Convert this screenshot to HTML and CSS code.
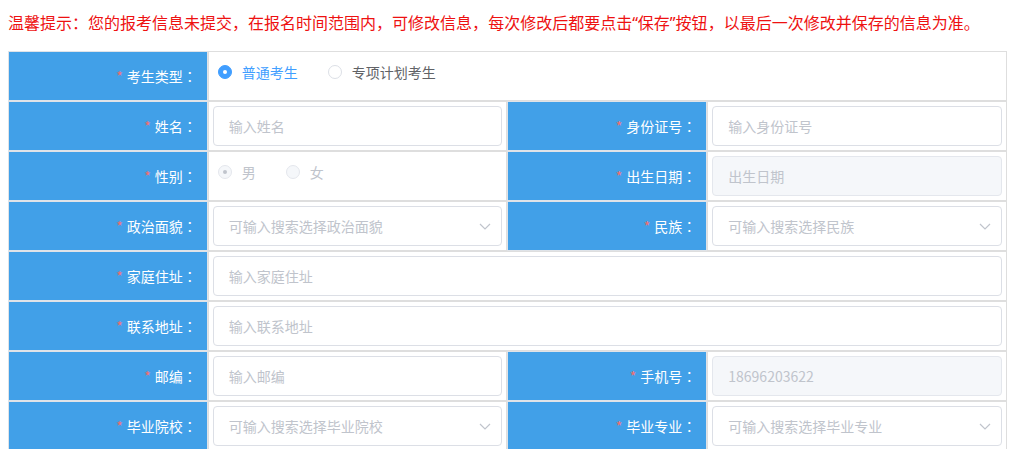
FILE: index.html
```html
<!DOCTYPE html>
<html lang="zh-CN">
<head>
<meta charset="utf-8">
<title>报考信息</title>
<link rel="stylesheet" href="styles.css">
</head>
<body>
<p class="notice">温馨提示<span class="cp">：</span>您的报考信息未提交<span class="cp">，</span>在报名时间范围内<span class="cp">，</span>可修改信息<span class="cp">，</span>每次修改后都要点击“保存”按钮<span class="cp">，</span>以最后一次修改并保存的信息为准。</p>
<div class="form-grid">
  <div class="cell label"><span class="req">*</span>考生类型<span class="colon">：</span></div>
  <div class="cell value span3 radios">
    <label class="radio checked"><span class="dot"></span><span class="rtext">普通考生</span></label>
    <label class="radio"><span class="dot"></span><span class="rtext">专项计划考生</span></label>
  </div>

  <div class="cell label"><span class="req">*</span>姓名<span class="colon">：</span></div>
  <div class="cell value"><div class="input">输入姓名</div></div>
  <div class="cell label"><span class="req">*</span>身份证号<span class="colon">：</span></div>
  <div class="cell value"><div class="input">输入身份证号</div></div>

  <div class="cell label"><span class="req">*</span>性别<span class="colon">：</span></div>
  <div class="cell value radios">
    <label class="radio disabled checked"><span class="dot"></span><span class="rtext">男</span></label>
    <label class="radio disabled"><span class="dot"></span><span class="rtext">女</span></label>
  </div>
  <div class="cell label"><span class="req">*</span>出生日期<span class="colon">：</span></div>
  <div class="cell value"><div class="input is-disabled">出生日期</div></div>

  <div class="cell label"><span class="req">*</span>政治面貌<span class="colon">：</span></div>
  <div class="cell value"><div class="input select">可输入搜索选择政治面貌<svg class="arrow" width="12" height="7" viewBox="0 0 12 7"><polyline points="1,1 6,6 11,1" fill="none" stroke="#c0c4cc" stroke-width="1.2"/></svg></div></div>
  <div class="cell label"><span class="req">*</span>民族<span class="colon">：</span></div>
  <div class="cell value"><div class="input select">可输入搜索选择民族<svg class="arrow" width="12" height="7" viewBox="0 0 12 7"><polyline points="1,1 6,6 11,1" fill="none" stroke="#c0c4cc" stroke-width="1.2"/></svg></div></div>

  <div class="cell label"><span class="req">*</span>家庭住址<span class="colon">：</span></div>
  <div class="cell value span3"><div class="input">输入家庭住址</div></div>

  <div class="cell label"><span class="req">*</span>联系地址<span class="colon">：</span></div>
  <div class="cell value span3"><div class="input">输入联系地址</div></div>

  <div class="cell label"><span class="req">*</span>邮编<span class="colon">：</span></div>
  <div class="cell value"><div class="input">输入邮编</div></div>
  <div class="cell label"><span class="req">*</span>手机号<span class="colon">：</span></div>
  <div class="cell value"><div class="input is-disabled">18696203622</div></div>

  <div class="cell label"><span class="req">*</span>毕业院校<span class="colon">：</span></div>
  <div class="cell value"><div class="input select">可输入搜索选择毕业院校<svg class="arrow" width="12" height="7" viewBox="0 0 12 7"><polyline points="1,1 6,6 11,1" fill="none" stroke="#c0c4cc" stroke-width="1.2"/></svg></div></div>
  <div class="cell label"><span class="req">*</span>毕业专业<span class="colon">：</span></div>
  <div class="cell value"><div class="input select">可输入搜索选择毕业专业<svg class="arrow" width="12" height="7" viewBox="0 0 12 7"><polyline points="1,1 6,6 11,1" fill="none" stroke="#c0c4cc" stroke-width="1.2"/></svg></div></div>
</div>
</body>
</html>
```
FILE: styles.css
```css
html, body {
  background: #fff;
}
body {
  margin: 8px;
  font-family: "Microsoft YaHei", "Noto Sans CJK SC", "Noto Sans", sans-serif;
  font-size: 14px;
  color: #606266;
}
.notice {
  margin: 0 0 15px 0;
  height: 28px;
  line-height: 28px;
  font-size: 16px;
  font-family: "Noto Sans", "Noto Sans CJK SC", sans-serif;
  color: #ee1111;
  white-space: nowrap;
  overflow: hidden;
}
.cp {
  font-family: "Noto Sans CJK TC", "Noto Sans CJK SC", sans-serif;
}
.form-grid {
  display: grid;
  grid-template-columns: 20% 30% 20% 30%;
  grid-auto-rows: 50px;
}
.cell {
  border: 1px solid #dedede;
  box-sizing: border-box;
  min-width: 0;
}
.label {
  background: #41a0e8;
  color: #fff;
  display: flex;
  align-items: center;
  justify-content: flex-end;
  padding-right: 10px;
  border-color: #dfe3e8;
}
.colon {
  font-family: "Noto Sans CJK TC", "Noto Sans CJK SC", sans-serif;
}
.req {
  color: #f56c6c;
  margin-right: 4px;
}
.value {
  background: #fff;
  padding: 4px;
}
.span3 {
  grid-column: span 3;
}
.input {
  height: 40px;
  box-sizing: border-box;
  border: 1px solid #dcdfe6;
  border-radius: 4px;
  padding: 0 15px;
  display: flex;
  align-items: center;
  color: #c0c4cc;
  background: #fff;
}
.input.is-disabled {
  background: #f5f7fa;
  border-color: #e4e7ed;
}
.select {
  justify-content: space-between;
  padding-right: 10px;
}
.arrow {
  flex: none;
}
.radios {
  display: flex;
  align-items: flex-start;
  padding: 13px 9px 0 9px;
}
.radio {
  display: flex;
  align-items: center;
  margin-right: 30px;
  line-height: 1;
  height: 14px;
}
.dot {
  width: 14px;
  height: 14px;
  box-sizing: border-box;
  border: 1px solid #dcdfe6;
  border-radius: 50%;
  background: #fff;
  position: relative;
  flex: none;
}
.rtext {
  padding-left: 10px;
  color: #606266;
}
.radio.checked .dot {
  background: #409eff;
  border-color: #409eff;
}
.radio.checked .dot::after {
  content: "";
  position: absolute;
  left: 50%;
  top: 50%;
  width: 4px;
  height: 4px;
  margin: -2px 0 0 -2px;
  border-radius: 50%;
  background: #fff;
}
.radio.checked .rtext {
  color: #409eff;
}
.radio.disabled .dot {
  background: #f5f7fa;
  border-color: #e4e7ed;
}
.radio.disabled .rtext {
  color: #c0c4cc;
}
.radio.disabled.checked .dot::after {
  background: #c0c4cc;
}
```
